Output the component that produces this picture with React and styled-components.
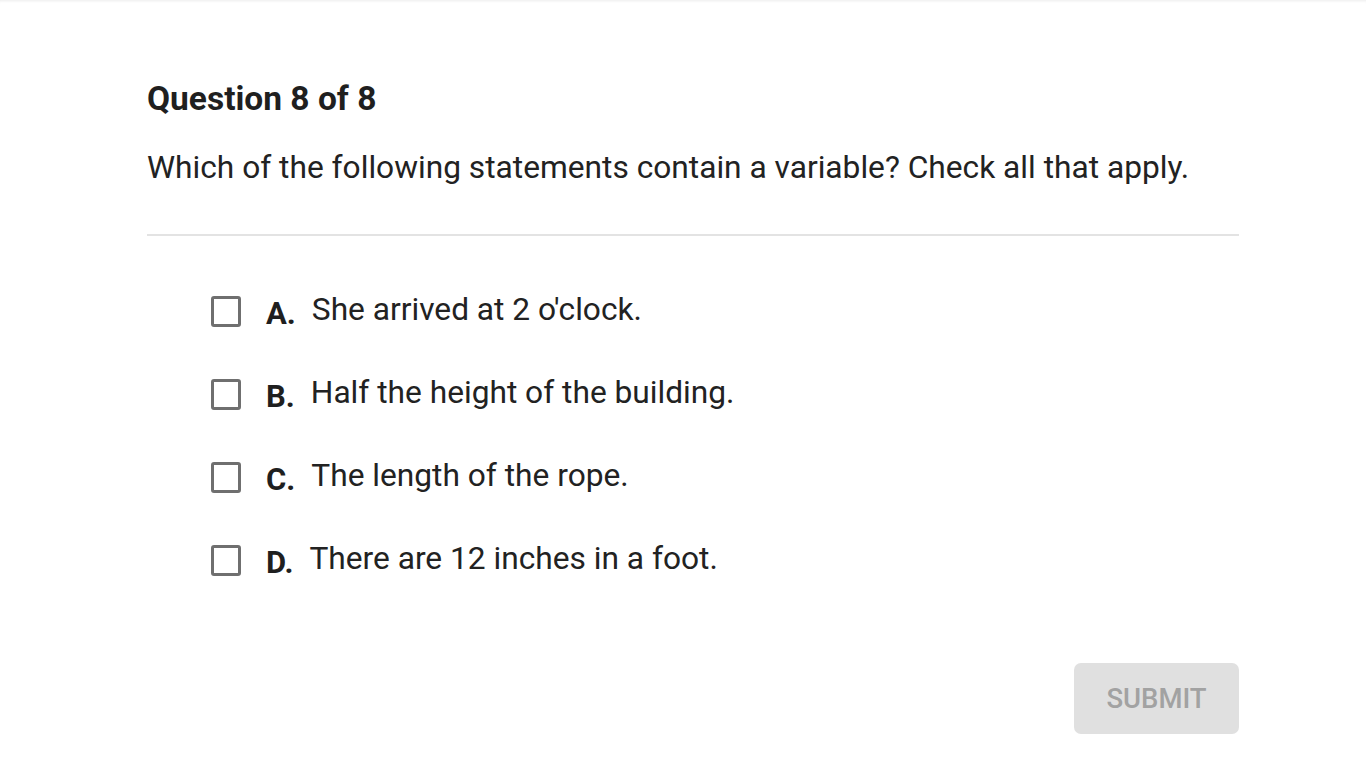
import React, { useState } from "react";
import styled, { createGlobalStyle } from "styled-components";

const GlobalStyle = createGlobalStyle`
  html, body {
    margin: 0;
    padding: 0;
    background: #ffffff;
    font-family: Roboto, "Liberation Sans", sans-serif;
    color: #212121;
  }
`;

const Page = styled.div`
  width: 1366px;
  height: 768px;
  box-sizing: border-box;
  box-shadow: inset 0 3px 3px -2px rgba(0, 0, 0, 0.08);
  padding: 79px 127px 0 147px;
  display: flex;
  flex-direction: column;
`;

const Title = styled.h1`
  margin: 0;
  font-size: 33.5px;
  font-weight: 700;
  line-height: 40px;
  color: #1f1f1f;
`;

const Prompt = styled.p`
  margin: 29px 0 0 0;
  font-size: 31.7px;
  font-weight: 400;
  line-height: 40px;
  color: #222;
`;

const Divider = styled.hr`
  margin: 46px 0 0 0;
  border: none;
  height: 2px;
  background: #e3e3e3;
`;

const Options = styled.div`
  display: flex;
  flex-direction: column;
  gap: 47px;
  padding: 57px 0 0 64px;
`;

const Option = styled.label`
  display: flex;
  align-items: center;
  height: 36px;
  cursor: pointer;
`;

const Box = styled.span`
  width: 30px;
  height: 31px;
  box-sizing: border-box;
  border: 3px solid #6f6f6f;
  border-radius: 3px;
  background: ${(p) => (p.checked ? "#6f6f6f" : "#fff")};
  flex-shrink: 0;
`;

const Letter = styled.span`
  margin: 0 16px 0 25px;
  font-size: 31px;
  font-weight: 700;
  color: #1f1f1f;
  position: relative;
  top: 2px;
`;

const OptionText = styled.span`
  font-size: 31.7px;
  font-weight: 400;
  color: #222;
  position: relative;
  top: -2px;
`;

const Footer = styled.div`
  display: flex;
  justify-content: flex-end;
  margin-top: 85px;
`;

const SubmitButton = styled.button`
  width: 165px;
  height: 71px;
  border: none;
  border-radius: 7px;
  background: #e0e0e0;
  color: #a2a2a2;
  font-family: Roboto, "Liberation Sans", sans-serif;
  font-size: 27.5px;
  font-weight: 500;
  cursor: default;
`;

const options = [
  { letter: "A.", text: "She arrived at 2 o'clock." },
  { letter: "B.", text: "Half the height of the building." },
  { letter: "C.", text: "The length of the rope." },
  { letter: "D.", text: "There are 12 inches in a foot." },
];

const App = () => {
  const [checked, setChecked] = useState({});

  return (
    <>
      <GlobalStyle />
      <Page>
        <Title>Question 8 of 8</Title>
        <Prompt>
          Which of the following statements contain a variable? Check all that apply.
        </Prompt>
        <Divider />
        <Options>
          {options.map((o) => (
            <Option
              key={o.letter}
              onClick={() => setChecked({ ...checked, [o.letter]: !checked[o.letter] })}
            >
              <Box checked={checked[o.letter]} />
              <Letter>{o.letter}</Letter>
              <OptionText>{o.text}</OptionText>
            </Option>
          ))}
        </Options>
        <Footer>
          <SubmitButton disabled>SUBMIT</SubmitButton>
        </Footer>
      </Page>
    </>
  );
};

export default App;
